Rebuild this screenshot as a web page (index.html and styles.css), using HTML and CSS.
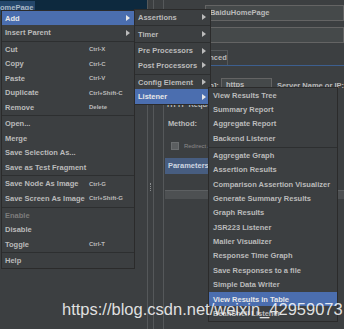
FILE: index.html
```html
<!DOCTYPE html>
<html lang="en">
<head>
    <meta charset="UTF-8">
    <title>JMeter - Add Listener</title>
    <link rel="stylesheet" href="styles.css">
</head>
<body>
    <div class="app">
        <div class="tree">
            <div class="tree-row"><span class="node">omePage</span></div>
        </div>
        <div class="split"><span class="grip"></span></div>
        <div class="panel">
            <div class="row name-row"><span class="lbl-name">Name:</span><div class="field">BaiduHomePage</div></div>
            <div class="row comment-row"><span class="lbl-name">Comments:</span><div class="field"></div></div>
            <div class="tabs"><span class="tab">Basic</span><span class="tab active">Advanced</span></div>
            <div class="group-title">Web Server</div>
            <div class="row proto-row">
                <div class="lbl-proto"><span>Protocol [http]:</span></div>
                <div class="field short">https</div>
                <span class="lbl-server">Server Name or IP:</span>
            </div>
            <div class="group-title req">HTTP Request</div>
            <div class="row method-row"><span>Method:</span></div>
            <div class="row check-row"><span class="box"></span><span class="hint">Redirect Automatically</span></div>
            <div class="tabs2"><span class="tab-on">Parameters</span></div>
            <div class="table-head"></div>
        </div>
    </div>

    <!-- context menu -->
    <div class="menu m1">
        <div class="item on"><span class="txt">Add</span><span class="arrow"></span></div>
        <div class="item"><span class="txt">Insert Parent</span><span class="arrow"></span></div>
        <div class="sep"></div>
        <div class="item"><span class="txt">Cut</span><span class="key">Ctrl-X</span></div>
        <div class="item"><span class="txt">Copy</span><span class="key">Ctrl-C</span></div>
        <div class="item"><span class="txt">Paste</span><span class="key">Ctrl-V</span></div>
        <div class="item"><span class="txt">Duplicate</span><span class="key">Ctrl+Shift-C</span></div>
        <div class="item"><span class="txt">Remove</span><span class="key">Delete</span></div>
        <div class="sep"></div>
        <div class="item"><span class="txt">Open...</span></div>
        <div class="item"><span class="txt">Merge</span></div>
        <div class="item"><span class="txt">Save Selection As...</span></div>
        <div class="item"><span class="txt">Save as Test Fragment</span></div>
        <div class="sep"></div>
        <div class="item"><span class="txt">Save Node As Image</span><span class="key">Ctrl-G</span></div>
        <div class="item"><span class="txt">Save Screen As Image</span><span class="key">Ctrl+Shift-G</span></div>
        <div class="sep"></div>
        <div class="item off"><span class="txt">Enable</span></div>
        <div class="item"><span class="txt">Disable</span></div>
        <div class="item"><span class="txt">Toggle</span><span class="key">Ctrl-T</span></div>
        <div class="sep"></div>
        <div class="item"><span class="txt">Help</span></div>
    </div>

    <!-- Add submenu -->
    <div class="menu m2">
        <div class="item"><span>Assertions</span><span class="arrow"></span></div>
        <div class="sep"></div>
        <div class="item"><span>Timer</span><span class="arrow"></span></div>
        <div class="sep"></div>
        <div class="item"><span>Pre Processors</span><span class="arrow"></span></div>
        <div class="item"><span>Post Processors</span><span class="arrow"></span></div>
        <div class="sep"></div>
        <div class="item"><span>Config Element</span><span class="arrow"></span></div>
        <div class="item on"><span>Listener</span><span class="arrow"></span></div>
    </div>

    <!-- Listener submenu -->
    <div class="menu m3">
        <div class="item">View Results Tree</div>
        <div class="item">Summary Report</div>
        <div class="item">Aggregate Report</div>
        <div class="item">Backend Listener</div>
        <div class="sep"></div>
        <div class="item">Aggregate Graph</div>
        <div class="item">Assertion Results</div>
        <div class="item">Comparison Assertion Visualizer</div>
        <div class="item">Generate Summary Results</div>
        <div class="item">Graph Results</div>
        <div class="item">JSR223 Listener</div>
        <div class="item">Mailer Visualizer</div>
        <div class="item">Response Time Graph</div>
        <div class="item">Save Responses to a file</div>
        <div class="item">Simple Data Writer</div>
        <div class="item on">View Results in Table</div>
        <div class="item">BeanShell Listener</div>
    </div>

    <div class="mark">https://blog.csdn.net/weixin_42959073</div>
</body>
</html>
```

FILE: styles.css
```css
* {
    box-sizing: border-box;
}
body {
    margin: 0;
    width: 344px;
    height: 329px;
    overflow: hidden;
    position: relative;
    background-color: #3c3f41;
    font-family: "Liberation Sans", Arial, sans-serif;
    font-size: 7.5px;
    font-weight: bold;
    color: #bbbbbb;
}
.app {
    display: flex;
    height: 329px;
}
.tree {
    width: 157px;
}
.tree-row {
    margin-top: 1px;
    height: 14px;
    line-height: 14px;
    background-color: #0d293e;
    box-shadow: 0 -1px 0 #0d293e;
}
.node {
    display: inline-block;
    padding-right: 2px;
    background-color: #24476b;
    color: #a9b7c6;
}
.split {
    position: relative;
    width: 7px;
    border-left: 1px solid #55585a;
    border-right: 1px solid #55585a;
}
.grip {
    position: absolute;
    left: 2px;
    top: 183px;
    width: 1px;
    height: 8px;
    border-left: 1px dotted #8a8d8f;
}
.panel {
    flex: 1;
    margin-left: 9px;
    padding-left: 3px;
    border-left: 1px solid #55585a;
}
.row {
    display: flex;
    align-items: center;
}
.field {
    flex: 1;
    height: 16px;
    line-height: 14px;
    padding-left: 4px;
    border: 1px solid #646464;
    background-color: #45494a;
}
.name-row {
    margin-top: 5px;
    height: 16px;
}
.comment-row {
    margin-top: 6px;
    height: 16px;
}
.lbl-name {
    width: 38px;
}
.tabs {
    display: flex;
    margin-top: 7px;
    margin-left: -3px;
    height: 16px;
    border-bottom: 1px solid #3d5f8f;
}
.tab {
    width: 23px;
    padding-left: 3px;
    line-height: 14px;
    border: 1px solid #55585a;
    border-bottom: none;
}
.tab.active {
    width: 41px;
}
.group-title {
    height: 10px;
    line-height: 10px;
}
.proto-row {
    margin-top: 2px;
    height: 14px;
}
.lbl-proto {
    display: flex;
    justify-content: flex-end;
    flex: none;
    width: 52px;
    white-space: nowrap;
}
.field.short {
    flex: none;
    width: 51px;
    height: 14px;
    line-height: 12px;
    margin-left: 2px;
}
.lbl-server {
    margin-left: 5px;
    white-space: nowrap;
}
.group-title.req {
    margin-top: 8px;
}
.method-row {
    margin-top: 7px;
    height: 12px;
    padding-left: 1px;
}
.check-row {
    margin-top: 11px;
    height: 11px;
}
.box {
    width: 8px;
    height: 8px;
    margin-left: 4px;
    background-color: #5b5e60;
    border: 1px solid #6b6e70;
}
.hint {
    margin-left: 5px;
    font-size: 6px;
    font-weight: normal;
    color: #8a8a8a;
}
.tabs2 {
    margin-top: 7px;
    margin-left: -2px;
    height: 16px;
}
.tab-on {
    display: block;
    width: 60px;
    height: 16px;
    line-height: 16px;
    padding-left: 3px;
    background-color: #475d80;
    color: #cdd5e0;
}
.table-head {
    margin-top: 16px;
    margin-left: -2px;
    height: 9px;
    background-color: #4d5052;
    border-top: 1px solid #5d6062;
}

/* popup menus */
.menu {
    position: absolute;
    background-color: #3c3f41;
    border: 1px solid #2b2b2b;
}
.m1 {
    left: 1px;
    top: 10px;
    width: 134px;
    z-index: 1;
}
.m2 {
    left: 134px;
    top: 9px;
    width: 77px;
    z-index: 2;
}
.m3 {
    left: 208px;
    top: 87px;
    width: 130px;
    z-index: 3;
}
.item {
    display: flex;
    align-items: center;
    height: 14.4px;
    padding-left: 3px;
    padding-right: 4px;
    white-space: nowrap;
}
.m3 .item {
    padding-left: 4px;
}
.item.on {
    background-color: #4b6eaf;
    color: #e8e8e8;
}
.item.off {
    color: #7c7c7c;
}
.txt {
    width: 84px;
}
.key {
    font-size: 6px;
}
.arrow {
    margin-left: auto;
    width: 0;
    height: 0;
    border-left: 4px solid #bbbbbb;
    border-top: 3px solid transparent;
    border-bottom: 3px solid transparent;
}
.on .arrow {
    border-left-color: #e8e8e8;
}
.sep {
    height: 1px;
    margin: 1px 0 0.5px;
    background-color: #2d2f30;
}

.mark {
    position: absolute;
    left: 62px;
    top: 301px;
    z-index: 4;
    font-size: 16.5px;
    line-height: 1;
    font-weight: normal;
    color: rgba(255, 255, 255, 0.85);
    white-space: nowrap;
}
```
